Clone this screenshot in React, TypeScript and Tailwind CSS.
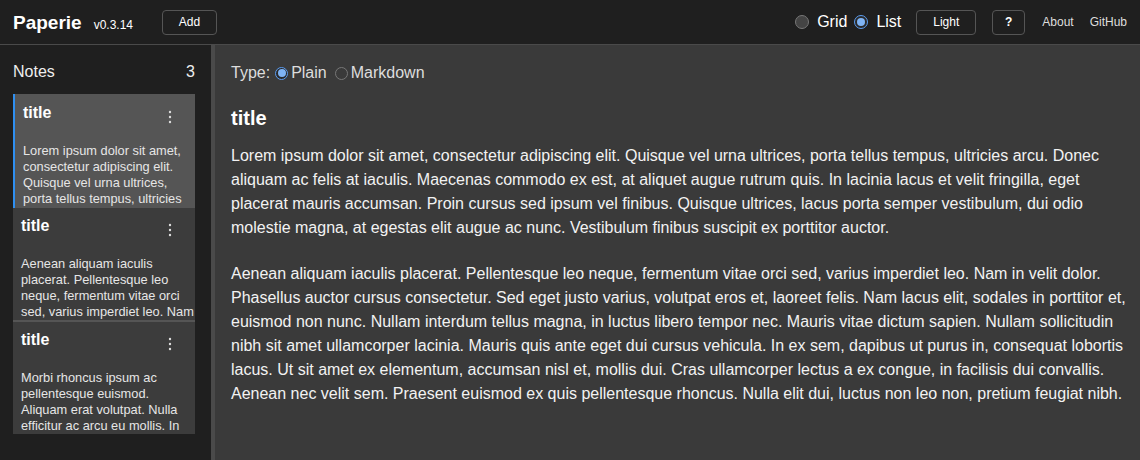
import React from "react";

// the 4-line preview of each note, broken where the list view breaks it
const notes = [
  ["Lorem ipsum dolor sit amet,", "consectetur adipiscing elit.", "Quisque vel urna ultrices,", "porta tellus tempus, ultricies"],
  ["Aenean aliquam iaculis", "placerat. Pellentesque leo", "neque, fermentum vitae orci", "sed, varius imperdiet leo. Nam"],
  ["Morbi rhoncus ipsum ac", "pellentesque euismod.", "Aliquam erat volutpat. Nulla", "efficitur ac arcu eu mollis. In"],
];

const Radio = ({ on, size = "big" }: { on: boolean; size?: "big" | "small" }) => {
  const dim = size === "big" ? "w-[14px] h-[14px]" : "w-[13px] h-[13px]";
  return on ? (
    <span className={`${dim} rounded-full border-[1.5px] border-[#5b9cf0] bg-[#2a2a2a] flex items-center justify-center shrink-0`}>
      <span className="w-[8px] h-[8px] rounded-full bg-[#7fb4f5]" />
    </span>
  ) : (
    <span className={`${dim} block rounded-full border border-[#777] ${size === "big" ? "bg-[#444]" : "bg-transparent"} shrink-0`} />
  );
};

const Kebab = () => (
  <svg width="4" height="14" viewBox="0 0 4 14" className="text-[#ddd]">
    <circle cx="2" cy="2" r="1.2" fill="currentColor" />
    <circle cx="2" cy="7" r="1.2" fill="currentColor" />
    <circle cx="2" cy="12" r="1.2" fill="currentColor" />
  </svg>
);

const App: React.FC = () => {
  return (
    <div className="w-[1140px] h-[460px] flex flex-col bg-[#3a3a3a] text-white overflow-hidden font-['Liberation_Sans',Arial,sans-serif]">
      {/* Header */}
      <header className="h-[45px] shrink-0 flex items-center bg-[#1f1f1f] border-b border-[#4a4a4a] pl-[13px] pr-[13px]">
        <span className="text-[19px] font-bold leading-none">Paperie</span>
        <span className="text-[12px] ml-[12px] mt-[5px] leading-none">v0.3.14</span>
        <button className="ml-[29px] w-[55px] h-[25px] border border-[#555] rounded-[4px] text-[12px] text-white">
          Add
        </button>
        <div className="ml-auto flex items-center">
          <Radio on={false} />
          <span className="text-[16px] ml-[8px]">Grid</span>
          <span className="ml-[7px] flex"><Radio on /></span>
          <span className="text-[16px] ml-[8px]">List</span>
          <button className="ml-[15px] w-[60px] h-[25px] border border-[#555] rounded-[4px] text-[12px]">
            Light
          </button>
          <button className="ml-[16px] w-[33px] h-[25px] border border-[#555] rounded-[4px] text-[12px] font-bold">
            ?
          </button>
          <span className="ml-[17px] text-[12px] text-[#ddd]">About</span>
          <span className="ml-[16px] text-[12px] text-[#ddd]">GitHub</span>
        </div>
      </header>

      <div className="flex flex-1 min-h-0">
        {/* Sidebar */}
        <aside className="w-[211px] shrink-0 bg-[#1f1f1f] px-[13px] pt-[15px]">
          <div className="flex items-center justify-between pr-[3px] h-[24px] text-[16px] text-[#eee]">
            <span>Notes</span>
            <span>3</span>
          </div>
          <div className="mt-[10px] w-[182px] flex flex-col">
            {notes.map((lines, i) => (
              <div
                key={i}
                className={`${
                  i === 0
                    ? "h-[114px] bg-[#555] border-l-2 border-[#2f8ff0] pl-[8px] pt-[10px]"
                    : i === 1
                    ? "h-[114px] bg-[#3c3c3c] pl-[8px] pt-[9px] border-b-2 border-[#555]"
                    : "h-[112px] bg-[#3c3c3c] pl-[8px] pt-[9px]"
                } pr-[1px] overflow-hidden`}
              >
                <div className="flex items-start justify-between h-[18px] pr-[22px]">
                  <span className="text-[16px] font-bold leading-[18px]">title</span>
                  <span className="mt-[6px] flex"><Kebab /></span>
                </div>
                <p className="mt-[21px] h-[64px] text-[12.8px] leading-[16px] text-[#e6e6e6] whitespace-nowrap">
                  {lines.map((l, j) => (
                    <span key={j} className="block">{l}</span>
                  ))}
                </p>
              </div>
            ))}
          </div>
        </aside>

        <div className="w-[4px] shrink-0 bg-[#4a4a4a]" />

        {/* Main */}
        <main className="flex-1 pl-[16px] pr-[12px] pt-[18px] text-[#f2f2f2]">
          <div className="flex items-center text-[16px] text-[#ddd] h-[20px]">
            <span>Type:</span>
            <span className="ml-[5px] flex"><Radio on size="small" /></span>
            <span className="ml-[3px]">Plain</span>
            <span className="ml-[8px] flex"><Radio on={false} size="small" /></span>
            <span className="ml-[3px]">Markdown</span>
          </div>
          <h1 className="mt-[24px] text-[20px] font-bold leading-[22px] text-white">title</h1>
          <p className="mt-[15px] text-[16px] leading-[24px]">
            Lorem ipsum dolor sit amet, consectetur adipiscing elit. Quisque vel urna ultrices, porta tellus tempus, ultricies arcu. Donec aliquam ac felis at iaculis. Maecenas commodo ex est, at aliquet augue rutrum quis. In lacinia lacus et velit fringilla, eget placerat mauris accumsan. Proin cursus sed ipsum vel finibus. Quisque ultrices, lacus porta semper vestibulum, dui odio molestie magna, at egestas elit augue ac nunc. Vestibulum finibus suscipit ex porttitor auctor.
          </p>
          <p className="mt-[22px] text-[16px] leading-[24px]">
            Aenean aliquam iaculis placerat. Pellentesque leo neque, fermentum vitae orci sed, varius imperdiet leo. Nam in velit dolor. Phasellus auctor cursus consectetur. Sed eget justo varius, volutpat eros et, laoreet felis. Nam lacus elit, sodales in porttitor et, euismod non nunc. Nullam interdum tellus magna, in luctus libero tempor nec. Mauris vitae dictum sapien. Nullam sollicitudin nibh sit amet ullamcorper lacinia. Mauris quis ante eget dui cursus vehicula. In ex sem, dapibus ut purus in, consequat lobortis lacus. Ut sit amet ex elementum, accumsan nisl et, mollis dui. Cras ullamcorper lectus a ex congue, in facilisis dui convallis. Aenean nec velit sem. Praesent euismod ex quis pellentesque rhoncus. Nulla elit dui, luctus non leo non, pretium feugiat nibh.
          </p>
        </main>
      </div>
    </div>
  );
};

export default App;
